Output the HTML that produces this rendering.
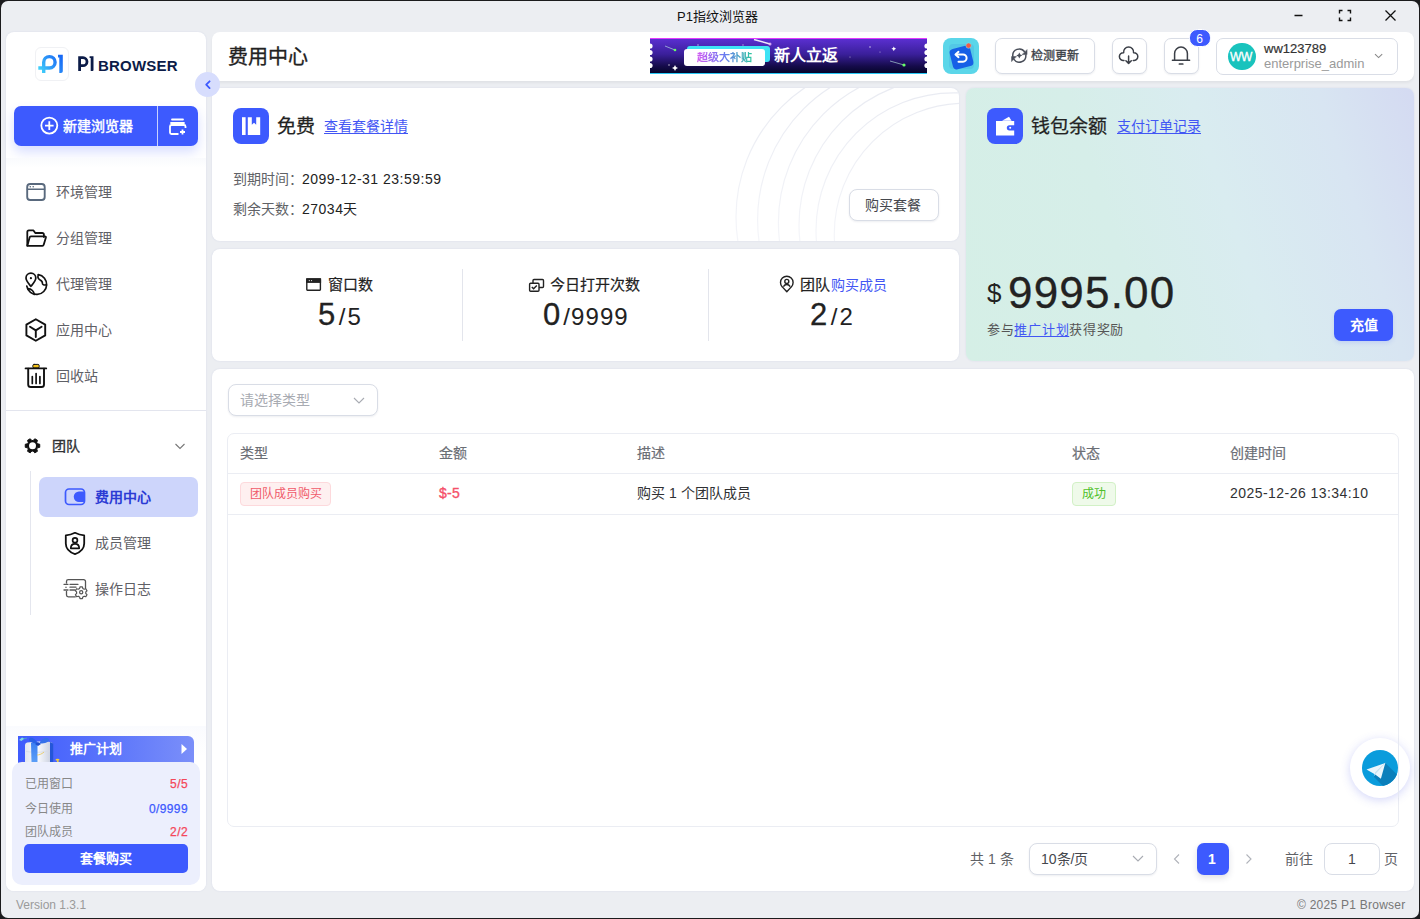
<!DOCTYPE html>
<html lang="zh-CN"><head><meta charset="utf-8">
<style>
*{box-sizing:border-box;margin:0;padding:0}
html,body{width:1420px;height:919px;overflow:hidden;background:#1b1b1d;font-family:"Liberation Sans",sans-serif;}
.abs{position:absolute}
.t{position:absolute;white-space:nowrap;line-height:1}
#win{position:absolute;left:1px;top:1px;width:1418px;height:917px;background:#eceef2;border-radius:7px;overflow:hidden}
#app{position:absolute;left:-1px;top:-1px;width:1420px;height:919px}
.card{position:absolute;background:#fff;border-radius:8px;box-shadow:0 0 2px rgba(70,90,170,.12)}
.mi{position:absolute;font-size:14px;line-height:1;color:#5f6066;white-space:nowrap}
.btn-out{position:absolute;background:#fff;border:1px solid #d9dde6;border-radius:7px;box-shadow:0 1px 2px rgba(30,40,80,.08)}
svg{position:absolute;overflow:visible}
</style></head>
<body>
<div id="win"><div id="app">
  <!-- title bar -->
  <div class="t" style="left:677px;top:10px;font-size:13px;color:#111">P1指纹浏览器</div>
  <svg style="left:1280px;top:0" width="130" height="32" viewBox="0 0 130 32">
    <path d="M14.5 15.5h8" stroke="#111" stroke-width="1.3"/>
    <path d="M59.5 13.5v-3h3M67.5 10.5h3v3M70.5 17.5v3h-3M62.5 20.5h-3v-3" stroke="#111" stroke-width="1.4" fill="none"/>
    <path d="M105.5 10.5l10 10M115.5 10.5l-10 10" stroke="#111" stroke-width="1.3"/>
  </svg>

  <!-- SIDEBAR -->
  <div class="card" style="left:6px;top:32px;width:200px;height:859px"></div>
  <!-- logo -->
  <div class="abs" style="left:35px;top:47px;width:34px;height:34px;border:1px solid #f0f1f4;border-radius:6px;background:#fff"></div>
  <svg style="left:0;top:0" width="1" height="1">
    <defs><linearGradient id="lg1" gradientUnits="userSpaceOnUse" x1="38" y1="73" x2="63" y2="55"><stop offset="0" stop-color="#45e0fb"/><stop offset=".55" stop-color="#2a8df7"/><stop offset="1" stop-color="#1462f5"/></linearGradient></defs>
    <path d="M43.7 73 V62.3 a5.7 5.7 0 1 1 5.7 5.7 H38.3" stroke="url(#lg1)" stroke-width="3.4" fill="none"/>
    <path d="M58 54.8 h4.8 v16.4 a1.8 1.8 0 0 1 -1.8 1.8 h-1.7 V57.6 h-1.3z" fill="url(#lg1)"/>
    <path d="M79.6 71.1 V57.7 h3.4 a4 4 0 0 1 0 8 h-2" stroke="#0c1c48" stroke-width="2.8" fill="none"/>
    <path d="M89.6 56.2 h3.9 v13.8 a1 1 0 0 1 -1 1 h-1.8 V58 h-1.1z" fill="#0c1c48"/>
  </svg>
  <div class="t" style="left:98px;top:57.5px;font-size:15px;font-weight:bold;color:#0c1c48;letter-spacing:0.2px">BROWSER</div>
  <!-- new browser button -->
  <div class="abs" style="left:14px;top:106px;width:184px;height:40px;border-radius:7px;background:#3d5afe;box-shadow:0 6px 12px rgba(61,90,254,.2)"></div>
  <div class="abs" style="left:157px;top:106px;width:1px;height:40px;background:#c9d2ff"></div>
  <div class="abs" style="left:6px;top:158px;width:200px;height:10px;background:linear-gradient(#f9fafd,#fff)"></div>
  <svg style="left:0;top:0" width="1" height="1">
    <circle cx="49.3" cy="125.6" r="8" stroke="#fff" stroke-width="1.8" fill="none"/>
    <path d="M49.3 121.3v8.6M45 125.6h8.6" stroke="#fff" stroke-width="1.8"/>
    <path d="M172 119.5h11M171 123h13" stroke="#fff" stroke-width="1.8" stroke-linecap="round"/>
    <path d="M185.5 128 v-1.5 a1.5 1.5 0 0 0 -1.5 -1.5 h-12.5 a1.5 1.5 0 0 0 -1.5 1.5 v6 a1.5 1.5 0 0 0 1.5 1.5 h7" stroke="#fff" stroke-width="1.8" fill="none"/>
    <path d="M182.5 129.5v5M180 132h5" stroke="#fff" stroke-width="1.8"/>
  </svg>
  <div class="t" style="left:63px;top:119px;font-size:14px;color:#fff;-webkit-text-stroke:.45px #fff">新建浏览器</div>

  <!-- menu -->
  <div class="abs" style="left:39px;top:477px;width:159px;height:40px;border-radius:7px;background:#cdd5fb"></div>
  <svg style="left:0;top:0" width="1" height="1" fill="none" stroke-linecap="round" stroke-linejoin="round">
    <!-- browser -->
    <rect x="27.2" y="184" width="17.5" height="16" rx="3" stroke="#59697d" stroke-width="1.9"/>
    <path d="M27.5 189.3h17" stroke="#59697d" stroke-width="1.6"/>
    <circle cx="30.3" cy="186.8" r=".8" fill="#59697d" stroke="none"/><circle cx="33.2" cy="186.8" r=".8" fill="#59697d" stroke="none"/>
    <!-- folder -->
    <path d="M27.3 245.5 V232 a1.6 1.6 0 0 1 1.6 -1.6 h4.6 l1.8 2.6 h7 a1.6 1.6 0 0 1 1.6 1.6 v2.4" stroke="#111" stroke-width="1.8"/>
    <path d="M27.3 245.8 l2.4 -8.6 a1.2 1.2 0 0 1 1.2 -.9 h14 a1 1 0 0 1 1 1.2 l-2.2 7.3 a1.4 1.4 0 0 1 -1.3 1 z" stroke="#111" stroke-width="1.8"/>
    <!-- globe with pin -->
    <path d="M38.3 274.6 A10 10 0 1 1 26.8 286.2" stroke="#111" stroke-width="1.7"/>
    <path d="M30.9 286.3 c-2.2 -2.6 -4.9 -5.1 -4.9 -8.2 a4.9 4.9 0 0 1 9.8 0 c0 3.1 -2.7 5.6 -4.9 8.2z" stroke="#111" stroke-width="1.7"/>
    <circle cx="30.9" cy="278.2" r="1.1" fill="#111" stroke="none"/>
    <path d="M38.3 274.8 c-.8 2.4 -.2 4.2 1.8 5.2 c1.8 .9 2.4 2.2 2.3 3.3 c-.1 1.3 1.4 2.1 4 1.6" stroke="#111" stroke-width="1.6"/>
    <path d="M27.6 288.6 c1.9 .1 3.6 .7 4.8 1.9 c1.1 1.1 1.6 2.4 2 4" stroke="#111" stroke-width="1.6"/>
    <!-- cube -->
    <path d="M35.8 319.2 l9.4 5.4 v10.8 l-9.4 5.4 l-9.4 -5.4 v-10.8 z" stroke="#111" stroke-width="1.9"/>
    <path d="M30 326.8 l5.8 3.6 l5.8 -3.6 M35.8 330.4 v6.6" stroke="#111" stroke-width="1.9"/>
    <!-- trash -->
    <rect x="32.8" y="364.4" width="6.4" height="3.6" rx="1.3" fill="#f3c21b" stroke="#111" stroke-width="1"/>
    <path d="M25.6 368.4 h20.6" stroke="#111" stroke-width="1.9"/>
    <path d="M28.2 368.8 v15.6 a2.6 2.6 0 0 0 2.6 2.6 h10.6 a2.6 2.6 0 0 0 2.6 -2.6 v-15.6" stroke="#111" stroke-width="1.9"/>
    <path d="M32.3 376.5v7M36.1 373.5v10M39.9 376.5v7" stroke="#111" stroke-width="1.7"/>
    <!-- gear -->
    <path d="M37.38 443.73 L39.74 444.26 L39.74 447.34 L37.38 447.87 L36.73 448.99 L37.45 451.30 L34.79 452.84 L33.15 451.06 L31.85 451.06 L30.21 452.84 L27.55 451.30 L28.27 448.99 L27.62 447.87 L25.26 447.34 L25.26 444.26 L27.62 443.73 L28.27 442.61 L27.55 440.30 L30.21 438.76 L31.85 440.54 L33.15 440.54 L34.79 438.76 L37.45 440.30 L36.73 442.61 Z" fill="#111" stroke="#111" stroke-width="1" stroke-linejoin="round"/><circle cx="32.5" cy="445.8" r="3.5" fill="#fff" stroke="none"/>
    <!-- active wallet icon -->
    <rect x="65.5" y="489" width="19" height="15.5" rx="3.5" stroke="#3d5afe" stroke-width="1.7"/>
    <path d="M85 491.5 h-6 a4.2 4.2 0 0 0 0 10.5 h6 z" fill="#3d5afe" stroke="none"/>
    <!-- shield -->
    <path d="M75 532.8 c3 1.6 6 2.4 9.2 2.6 v8.2 c0 5 -4 8.8 -9.2 10.6 c-5.2 -1.8 -9.2 -5.6 -9.2 -10.6 v-8.2 c3.2 -.2 6.2 -1 9.2 -2.6z" stroke="#111" stroke-width="1.8"/>
    <circle cx="75" cy="540.3" r="2.4" stroke="#111" stroke-width="1.7"/>
    <path d="M70.8 548.3 c0 -3 1.8 -4.5 4.2 -4.5 s4.2 1.5 4.2 4.5 z" stroke="#111" stroke-width="1.7"/>
    <!-- log -->
    <path d="M66.5 583 v-1.5 a1.8 1.8 0 0 1 1.8 -1.8 h15.4 a1.8 1.8 0 0 1 1.8 1.8 v7" stroke="#555" stroke-width="1.3"/>
    <path d="M66.5 591.5 v3.5 a1.8 1.8 0 0 0 1.8 1.8 h7" stroke="#555" stroke-width="1.3"/>
    <path d="M64 584.3h4M70 584.3h8M64 590h4M70 590h5M70 587.2h6M66 587.2v.2" stroke="#555" stroke-width="1.3"/>
    <g transform="translate(81.2 592.2)">
      <path d="M-1.2 -5.4 h2.4 l.4 1.6 l1.4 .8 l1.6 -.5 l1.2 2.1 l-1.2 1.1 v1.6 l1.2 1.1 l-1.2 2.1 l-1.6 -.5 l-1.4 .8 l-.4 1.6 h-2.4 l-.4 -1.6 l-1.4 -.8 l-1.6 .5 l-1.2 -2.1 l1.2 -1.1 v-1.6 l-1.2 -1.1 l1.2 -2.1 l1.6 .5 l1.4 -.8 z" stroke="#555" stroke-width="1.2" fill="#fff"/>
      <circle r="1.6" stroke="#555" stroke-width="1.2"/>
    </g>
  </svg>
  <div class="mi" style="left:56px;top:185px">环境管理</div>
  <div class="mi" style="left:56px;top:231px">分组管理</div>
  <div class="mi" style="left:56px;top:277px">代理管理</div>
  <div class="mi" style="left:56px;top:323px">应用中心</div>
  <div class="mi" style="left:56px;top:369px">回收站</div>
  <div class="abs" style="left:6px;top:410px;width:200px;height:1px;background:#e3e5ee"></div>
  <div class="mi" style="left:52px;top:439px;color:#303133;-webkit-text-stroke:.35px #303133">团队</div>
  <svg style="left:0;top:0" width="1" height="1"><path d="M175.5 444l4.5 4.5 4.5-4.5" stroke="#777" stroke-width="1.1" fill="none"/></svg>
  <div class="abs" style="left:30px;top:471px;width:1px;height:144px;background:#e4e6ee"></div>
    <div class="mi" style="left:95px;top:490px;color:#2b3bd4;font-weight:bold">费用中心</div>
  <div class="mi" style="left:95px;top:536px">成员管理</div>
  <div class="mi" style="left:95px;top:582px">操作日志</div>

  <!-- promo -->
  <div class="abs" style="left:6px;top:726px;width:200px;height:165px;border-radius:0 0 8px 8px;background:linear-gradient(#fafbfe,#fff 30px)"></div>
  <div class="abs" style="left:18px;top:736px;width:176px;height:30px;border-radius:0 6px 0 0;background:linear-gradient(90deg,#3f5cfd 0%,#5a74fb 50%,#7b8ff9 100%);overflow:hidden">
    <svg style="left:0;top:0" width="50" height="30">
      <defs><linearGradient id="gb" x1="0" y1="0" x2="1" y2="0"><stop offset="0" stop-color="#e2e6ef"/><stop offset=".45" stop-color="#fafbff"/><stop offset="1" stop-color="#c3cadb"/></linearGradient>
      <linearGradient id="rb" x1="0" y1="0" x2="0" y2="1"><stop offset="0" stop-color="#3c7ff2"/><stop offset="1" stop-color="#5b9ef7"/></linearGradient></defs>
      <path d="M1 4 l3 -2.5 l2.5 1 l-3 2.5z" fill="#7fd8e0"/><path d="M5 3 l4 -1" stroke="#4ab0c0" stroke-width=".8"/>
      <path d="M7 9 q0 -2 2 -2.6 l16 -1.2 q9 0 10 2.5 v18.3 h-28z" fill="url(#gb)"/>
      <path d="M8 15.5 q12 2 27 -1" stroke="#d5dae6" stroke-width=".8" fill="none"/>
      <path d="M13 7 l6.5 -.5 v19.5 h-6z" fill="url(#rb)"/>
      <path d="M32 6 l3.2 1.5 v18.5 h-3.2z" fill="#2456d8"/>
      <path d="M20 7.5 c-3 -6 -9 -7.5 -9 -4 c0 2.5 4 4 9 4z" fill="#2a62e6"/>
      <path d="M21 7.5 c3 -6 10 -7 10 -3.5 c0 2.5 -5 3.8 -10 3.5z" fill="#3570ea"/>
      <path d="M17 8 l3 -2 l3 2 l-3 2z" fill="#1f4fd0"/>
      <path d="M19 19 c2 0 5 -1 7 -3" stroke="#e8c552" stroke-width=".8" fill="none"/>
      <ellipse cx="39.5" cy="23.8" rx="2" ry="1" fill="#f5cf3a"/><rect x="39" y="24.5" width="1.6" height="3" fill="#f5cf3a"/>
      <circle cx="4.5" cy="27.5" r="1.8" fill="#ef6a45"/><circle cx="36" cy="27.5" r="1.3" fill="#ef6a45"/>
    </svg>
  </div>
  <div class="t" style="left:70px;top:742px;font-size:13px;font-weight:bold;color:#fff">推广计划</div>
  <svg style="left:0;top:0" width="1" height="1"><path d="M181.5 744v10l5.5 -5z" fill="#fff"/></svg>
  <div class="abs" style="left:12px;top:762px;width:188px;height:123px;border-radius:10px;background:#eceffd"></div>
  <div class="t" style="left:25px;top:778px;font-size:12px;color:#888">已用窗口</div>
  <div class="t" style="left:25px;top:803px;font-size:12px;color:#888">今日使用</div>
  <div class="t" style="left:25px;top:826px;font-size:12px;color:#888">团队成员</div>
  <div class="t" style="right:1232px;top:778px;font-size:12px;color:#f4475a;letter-spacing:.4px;-webkit-text-stroke:.25px #f4475a">5/5</div>
  <div class="t" style="right:1232px;top:803px;font-size:12px;color:#3d5afe;letter-spacing:.4px;-webkit-text-stroke:.25px #3d5afe">0/9999</div>
  <div class="t" style="right:1232px;top:826px;font-size:12px;color:#f4475a;letter-spacing:.4px;-webkit-text-stroke:.25px #f4475a">2/2</div>
  <div class="abs" style="left:24px;top:844px;width:164px;height:29px;border-radius:5px;background:#3d5afe"></div>
  <div class="t" style="left:80px;top:852px;font-size:13px;color:#fff;font-weight:bold">套餐购买</div>

  <!-- HEADER -->
  <div class="card" style="left:212px;top:32px;width:1202px;height:49px;box-shadow:0 2px 3px rgba(0,0,0,.05)"></div>
  <div class="t" style="left:228px;top:47px;font-size:20px;color:#222;-webkit-text-stroke:.3px #222">费用中心</div>
  <!-- banner -->
  <div class="abs" style="left:650px;top:38px;width:277px;height:36px;overflow:hidden;background:linear-gradient(180deg,#5a2fd0 0%,#3a1f9a 45%,#150b4a 80%,#05052a 100%);border-top:1.5px solid #e23cff;border-bottom:1.5px solid #29c8f5">
    <svg style="left:0;top:0" width="277" height="36">
      <circle cx="0" cy="7" r="2.6" fill="#fff"/><circle cx="0" cy="13.5" r="2.6" fill="#fff"/><circle cx="0" cy="20" r="2.6" fill="#fff"/><circle cx="0" cy="26.5" r="2.6" fill="#fff"/>
      <circle cx="277" cy="7" r="2.6" fill="#fff"/><circle cx="277" cy="13.5" r="2.6" fill="#fff"/><circle cx="277" cy="20" r="2.6" fill="#fff"/><circle cx="277" cy="26.5" r="2.6" fill="#fff"/>
      <path d="M15 7 l10 4" stroke="#cfe" stroke-width=".8" opacity=".7"/><circle cx="25" cy="11" r="1.3" fill="#6f6"/>
      <path d="M104 0.5 l16 4.5" stroke="#fff" stroke-width="1.5" opacity=".9"/><circle cx="120" cy="5" r="1.5" fill="#f0c0ff" opacity=".8"/>
      <path d="M240 22 l14 4" stroke="#cfe" stroke-width=".8" opacity=".7"/><circle cx="254" cy="26" r="1.6" fill="#6f6"/>
      <path d="M24 28 l1 -2 l1 2 l2 1 l-2 1 l-1 2 l-1 -2 l-2 -1z" fill="#fff"/>
      <circle cx="19" cy="26" r=".8" fill="#fff" opacity=".7"/><circle cx="48" cy="6" r=".8" fill="#fff" opacity=".6"/><circle cx="93" cy="6" r=".7" fill="#fff" opacity=".6"/>
      <circle cx="220" cy="8" r=".8" fill="#fff" opacity=".7"/><circle cx="200" cy="18" r=".6" fill="#fff" opacity=".6"/><circle cx="230" cy="13" r=".6" fill="#fff" opacity=".6"/>
      <path d="M243 9 l.8 -1.6 l.8 1.6 l1.6 .8 l-1.6 .8 l-.8 1.6 l-.8 -1.6 l-1.6 -.8z" fill="#fff"/>
    </svg>
    <div class="abs" style="left:37px;top:7px;width:83px;height:16px;border-radius:3px;background:#3ee3f5"></div>
    <div class="abs" style="left:34px;top:10px;width:81px;height:17px;border-radius:3px;background:#fff"></div>
    <div class="t" style="left:47px;top:13px;font-size:11px;font-weight:bold;background:linear-gradient(90deg,#d35cf3,#6b7cf0 50%,#2ec6a0);-webkit-background-clip:text;color:transparent">超级大补贴</div>
    <div class="t" style="left:124px;top:9px;font-size:16px;font-weight:bold;color:#fff">新人立返</div>
  </div>
  <!-- app icon -->
  <div class="abs" style="left:943px;top:38px;width:36px;height:36px;border-radius:8px;background:#5bd6e9;overflow:hidden">
    <div class="abs" style="left:6px;top:6px;width:25px;height:25px;border-radius:4px;background:#53c8e6"></div>
    <div class="abs" style="left:8px;top:9px;width:21px;height:21px;border-radius:4px;background:#165fe6;transform:rotate(-14deg)"></div>
    <svg style="left:0;top:0" width="36" height="36"><path d="M13.5 16.5 h6.5 a3.6 3.6 0 0 1 0 7.2 h-4.5" stroke="#fff" stroke-width="2" fill="none" stroke-linecap="round"/><path d="M15.5 13.8 l-3 2.7 l3 2.7" stroke="#fff" stroke-width="2" fill="none" stroke-linecap="round" stroke-linejoin="round"/><circle cx="25.6" cy="7.6" r="2.7" fill="#f25c4a" stroke="#7fe0ee" stroke-width=".6"/></svg>
  </div>
  <!-- check update -->
  <div class="btn-out" style="left:995px;top:38px;width:100px;height:36px"></div>
  <svg style="left:0;top:0" width="1" height="1" fill="none" stroke="#4a4f5a" stroke-width="1.5" stroke-linecap="round">
    <path d="M1012.8 56.2 A6.5 6.5 0 0 1 1024.6 51.8 M1025.8 55 A6.5 6.5 0 0 1 1014 59.4"/>
    <path d="M1027 50 v4.6 h-4.6z M1011.6 61.2 v-4.6 h4.6z" fill="#4a4f5a" stroke-width=".6" stroke-linejoin="round"/>
    <path d="M1019.3 52.6 l1 2 l2 1 l-2 1 l-1 2 l-1 -2 l-2 -1 l2 -1z" fill="#4a4f5a" stroke="none"/>
  </svg>
  <div class="t" style="left:1031px;top:50px;font-size:12px;color:#3b3f47;-webkit-text-stroke:.3px #3b3f47">检测更新</div>
  <!-- cloud -->
  <div class="btn-out" style="left:1112px;top:38px;width:35px;height:36px"></div>
  <svg style="left:0;top:0" width="1" height="1" fill="none" stroke="#3b3f47" stroke-width="1.6" stroke-linecap="round" stroke-linejoin="round">
    <path d="M1123.98 60.44 A3.9 3.9 0 1 1 1123.65 52.72 A5 5 0 1 1 1133.55 52.72 A3.9 3.9 0 1 1 1133.22 60.44" stroke-width="1.5"/>
    <path d="M1128.6 56 v7.4 M1125.9 60.7 l2.7 2.7 l2.7 -2.7" stroke-width="1.5"/>
  </svg>
  <!-- bell -->
  <div class="btn-out" style="left:1164px;top:38px;width:35px;height:36px"></div>
  <svg style="left:0;top:0" width="1" height="1" fill="none" stroke="#3b3f47" stroke-width="1.6" stroke-linecap="round" stroke-linejoin="round">
    <path d="M1174.6 60 v-6.5 a6.4 6.4 0 0 1 12.8 0 v6.5 M1172.4 60.3 h17.2" stroke-width="1.5"/>
    <path d="M1179.4 64 h3.4" stroke-width="1.7"/>
  </svg>
  <div class="abs" style="left:1190px;top:29.7px;width:19.5px;height:16.3px;border-radius:8.2px;background:#3d5afe;border:1px solid #fff;box-sizing:content-box;margin:-1px 0 0 -1px"></div>
  <div class="t" style="left:1196.3px;top:32.5px;font-size:12px;color:#fff">6</div>
  <!-- user -->
  <div class="btn-out" style="left:1216px;top:38px;width:182px;height:37px;box-shadow:none"></div>
  <div class="abs" style="left:1228px;top:42.5px;width:27.5px;height:27.5px;border-radius:50%;background:#19c3bd"></div>
  <div class="t" style="left:1230px;top:51px;font-size:12px;color:#fff;letter-spacing:-.3px;-webkit-text-stroke:.3px #fff">WW</div>
  <div class="t" style="left:1264px;top:42px;font-size:13px;color:#333;-webkit-text-stroke:.2px #333">ww123789</div>
  <div class="t" style="left:1264px;top:57px;font-size:13px;color:#9a9a9a">enterprise_admin</div>
  <svg style="left:0;top:0" width="1" height="1"><path d="M1375 54.2 l3.6 3.4 l3.6 -3.4" stroke="#888" stroke-width="1.1" fill="none"/></svg>

  <!-- FREE CARD -->
  <div class="card" style="left:212px;top:88px;width:747px;height:153px;overflow:hidden">
    <svg style="left:0;top:0" width="746" height="153" fill="none" stroke="url(#arcg)" stroke-width="1.2"><defs><linearGradient id="arcg" gradientUnits="userSpaceOnUse" x1="0" y1="0" x2="0" y2="153"><stop offset="0" stop-color="#e9ebf2"/><stop offset="1" stop-color="#f4f5f9"/></linearGradient></defs>
      <circle cx="753" cy="146" r="130.7"/>
      <circle cx="741.5" cy="142.3" r="137.5"/>
      <circle cx="734" cy="137" r="147"/>
      <circle cx="719.8" cy="134.6" r="153.4"/>
      <circle cx="702.6" cy="131.9" r="157"/>
      <circle cx="679.8" cy="129" r="155.8"/>
    </svg>
  </div>
  <div class="abs" style="left:233px;top:108px;width:36px;height:36px;border-radius:8px;background:#3d5afe"></div>
  <svg style="left:0;top:0" width="1" height="1"><rect x="242" y="117.2" width="3.6" height="17.8" fill="#fff"/><path d="M247.8 117.2 h4 v7.5 l2.2 -2 l2.2 2 v-7.5 h4 v17.8 h-12.4z" fill="#fff"/></svg>
  <div class="t" style="left:277px;top:117px;font-size:19px;color:#222;-webkit-text-stroke:.25px #222">免费</div>
  <div class="t" style="left:324px;top:119px;font-size:14px;color:#4256f4;text-decoration:underline;text-underline-offset:2px">查看套餐详情</div>
  <div class="t" style="left:233px;top:172px;font-size:14px;color:#606266">到期时间：</div>
  <div class="t" style="left:302px;top:172px;font-size:14px;color:#222;letter-spacing:.5px">2099-12-31 23:59:59</div>
  <div class="t" style="left:233px;top:202px;font-size:14px;color:#606266">剩余天数：</div>
  <div class="t" style="left:302px;top:202px;font-size:14px;color:#222;letter-spacing:.5px">27034天</div>
  <div class="btn-out" style="left:849px;top:189px;width:90px;height:32px;border-radius:8px"></div>
  <div class="t" style="left:865px;top:198px;font-size:14px;color:#45474d">购买套餐</div>

  <!-- STATS -->
  <div class="card" style="left:212px;top:249px;width:747px;height:112px"></div>
  <div class="abs" style="left:462px;top:269px;width:1px;height:72px;background:#e3e5ec"></div>
  <div class="abs" style="left:708px;top:269px;width:1px;height:72px;background:#e3e5ec"></div>
  <svg style="left:0;top:0" width="1" height="1" fill="none" stroke="#222" stroke-width="1.4">
    <rect x="306.8" y="279" width="13.6" height="11.2" rx=".6"/><rect x="306.8" y="279" width="13.6" height="3.2" fill="#222"/><circle cx="309.3" cy="280.6" r=".55" fill="#fff" stroke="none"/><circle cx="311.6" cy="280.6" r=".55" fill="#fff" stroke="none"/>
    <rect x="533" y="279.5" width="10.5" height="8" rx="1"/><rect x="529.6" y="283.2" width="9.4" height="8" rx="1" fill="#fff"/><path d="M531.8 287 l1.8 1.8 l3.2 -3.4"/>
    <path d="M786.8 291.8 L782.3 286.9 A6.3 6.3 0 1 1 791.3 286.9 Z" stroke-linejoin="round"/><circle cx="786.8" cy="281.4" r="2"/><path d="M783.4 286.6 c.9 -1.5 2 -2.1 3.4 -2.1 s2.5 .6 3.4 2.1"/>
  </svg>
  <div class="t" style="left:328px;top:277px;font-size:15px;color:#222;-webkit-text-stroke:.2px #222">窗口数</div>
  <div class="t" style="left:550px;top:277px;font-size:15px;color:#222;-webkit-text-stroke:.2px #222">今日打开次数</div>
  <div class="t" style="left:800px;top:277px;font-size:15px;color:#222;-webkit-text-stroke:.2px #222">团队</div>
  <div class="t" style="left:831px;top:278px;font-size:14px;color:#4256f4">购买成员</div>
  <div class="t" style="left:318px;top:299px;font-size:31px;color:#222;-webkit-text-stroke:.3px #222">5<span style="font-size:24px;-webkit-text-stroke:0;letter-spacing:2px;margin-left:3.5px">/5</span></div>
  <div class="t" style="left:543px;top:299px;font-size:31px;color:#222;-webkit-text-stroke:.3px #222">0<span style="font-size:24px;-webkit-text-stroke:0;letter-spacing:1.1px;margin-left:3px">/9999</span></div>
  <div class="t" style="left:810px;top:299px;font-size:31px;color:#222;-webkit-text-stroke:.3px #222">2<span style="font-size:24px;-webkit-text-stroke:0;letter-spacing:2px;margin-left:3.5px">/2</span></div>

  <!-- WALLET -->
  <div class="card" style="left:966px;top:88px;width:448px;height:273px;background:linear-gradient(72deg,#d5efe6 0%,#d6eee9 35%,#d9ecf0 58%,#d8e5f2 82%,#d4daf2 100%)"></div>
  <div class="abs" style="left:987px;top:108px;width:36px;height:36px;border-radius:8px;background:#3d5afe"></div>
  <svg style="left:0;top:0" width="1" height="1"><path d="M1002 120.8 l7 -4 l2.6 4z" fill="#fff"/><path d="M996 121 h18.2 v4.2 h-4.8 a2.6 2.6 0 0 0 0 5.2 h4.8 v5 h-18.2z" fill="#fff"/><circle cx="1010.2" cy="127.8" r="1" fill="#fff"/></svg>
  <div class="t" style="left:1031px;top:117px;font-size:19px;color:#222;-webkit-text-stroke:.25px #222">钱包余额</div>
  <div class="t" style="left:1117px;top:119px;font-size:14px;color:#4256f4;text-decoration:underline;text-underline-offset:2px">支付订单记录</div>
  <div class="t" style="left:987px;top:280px;font-size:26px;color:#222">$</div>
  <div class="t" style="left:1008px;top:271px;font-size:44px;color:#222;letter-spacing:1.2px;-webkit-text-stroke:.3px #222">9995.00</div>
  <div class="t" style="left:987px;top:323px;font-size:13px;color:#555;letter-spacing:.7px">参与<span style="color:#4256f4;text-decoration:underline;text-underline-offset:2px">推广计划</span>获得奖励</div>
  <div class="abs" style="left:1334px;top:309px;width:59px;height:32px;border-radius:7px;background:#3d5afe;box-shadow:0 2px 4px rgba(61,90,254,.15)"></div>
  <div class="t" style="left:1350px;top:318px;font-size:14px;color:#fff;font-weight:bold">充值</div>

  <!-- collapse button -->
  <div class="abs" style="left:195px;top:72px;width:25px;height:25px;border-radius:50%;background:#d7ddfd"></div>
  <svg style="left:0;top:0" width="1" height="1"><path d="M209.6 81.3l-3.4 3.4 3.4 3.4" stroke="#3d5afe" stroke-width="1.8" fill="none" stroke-linecap="round" stroke-linejoin="round"/></svg>

  <!-- TABLE CARD -->
  <div class="card" style="left:212px;top:369px;width:1202px;height:522px"></div>
  <div class="btn-out" style="left:228px;top:384px;width:150px;height:32px;border-radius:8px"></div>
  <div class="t" style="left:240px;top:393px;font-size:14px;color:#a8abb2">请选择类型</div>
  <svg style="left:0;top:0" width="1" height="1"><path d="M354 398 l5 5 l5 -5" stroke="#a8abb2" stroke-width="1.1" fill="none"/></svg>
  <div class="abs" style="left:227px;top:433px;width:1172px;height:394px;border:1px solid #ebedf3;border-radius:7px"></div>
  <div class="abs" style="left:228px;top:473px;width:1170px;height:1px;background:#ebedf3"></div>
  <div class="abs" style="left:228px;top:514px;width:1170px;height:1px;background:#ebedf3"></div>
  <div class="t" style="left:240px;top:446px;font-size:14px;color:#6b6e75;-webkit-text-stroke:.2px #6b6e75">类型</div>
  <div class="t" style="left:439px;top:446px;font-size:14px;color:#6b6e75;-webkit-text-stroke:.2px #6b6e75">金额</div>
  <div class="t" style="left:637px;top:446px;font-size:14px;color:#6b6e75;-webkit-text-stroke:.2px #6b6e75">描述</div>
  <div class="t" style="left:1072px;top:446px;font-size:14px;color:#6b6e75;-webkit-text-stroke:.2px #6b6e75">状态</div>
  <div class="t" style="left:1230px;top:446px;font-size:14px;color:#6b6e75;-webkit-text-stroke:.2px #6b6e75">创建时间</div>
  <div class="abs" style="left:240px;top:482px;width:91px;height:24px;border-radius:4px;background:#fef0f0;border:1px solid #fdd9dc"></div>
  <div class="t" style="left:250px;top:488px;font-size:12px;color:#f05b6a">团队成员购买</div>
  <div class="t" style="left:439px;top:486px;font-size:14px;color:#f5506a;-webkit-text-stroke:.35px #f5506a;letter-spacing:.3px">$-5</div>
  <div class="t" style="left:637px;top:486px;font-size:14px;color:#303133">购买 1 个团队成员</div>
  <div class="abs" style="left:1072px;top:482px;width:44px;height:24px;border-radius:4px;background:#effaea;border:1px solid #d2f1c6"></div>
  <div class="t" style="left:1082px;top:488px;font-size:12px;color:#4fc02a">成功</div>
  <div class="t" style="left:1230px;top:486px;font-size:14px;color:#303133;letter-spacing:.45px">2025-12-26 13:34:10</div>
  <!-- pagination -->
  <div class="t" style="left:970px;top:852px;font-size:14px;color:#606266">共 1 条</div>
  <div class="btn-out" style="left:1029px;top:843px;width:128px;height:32px;border-radius:8px"></div>
  <div class="t" style="left:1041px;top:852px;font-size:14px;color:#45474d">10条/页</div>
  <svg style="left:0;top:0" width="1" height="1"><path d="M1133 856 l5 5 l5 -5" stroke="#a8abb2" stroke-width="1.1" fill="none"/>
    <path d="M1179 854.5 l-4.5 4.5 l4.5 4.5" stroke="#b0b3ba" stroke-width="1.1" fill="none"/>
    <path d="M1246.5 854.5 l4.5 4.5 l-4.5 4.5" stroke="#b0b3ba" stroke-width="1.1" fill="none"/></svg>
  <div class="abs" style="left:1197px;top:843px;width:32px;height:32px;border-radius:7px;background:#3d5afe;box-shadow:0 3px 6px rgba(40,50,90,.15)"></div>
  <div class="t" style="left:1208px;top:852px;font-size:14px;color:#fff;font-weight:bold">1</div>
  <div class="t" style="left:1285px;top:852px;font-size:14px;color:#606266">前往</div>
  <div class="btn-out" style="left:1324px;top:843px;width:56px;height:32px;border-radius:8px;box-shadow:none"></div>
  <div class="t" style="left:1348px;top:852px;font-size:14px;color:#45474d">1</div>
  <div class="t" style="left:1384px;top:852px;font-size:14px;color:#606266">页</div>
  <!-- telegram -->
  <div class="abs" style="left:1350px;top:738px;width:60px;height:60px;border-radius:50%;background:#fff;box-shadow:0 2px 10px rgba(80,90,230,.25)"></div>
  <div class="abs" style="left:1398px;top:738px;width:1px;height:60px;background:#e6e9f2"></div>
  <div class="abs" style="left:1362px;top:750px;width:36px;height:36px;border-radius:50%;background:#0a9cdc;overflow:hidden">
    <svg style="left:0;top:0" width="36" height="36"><path d="M23.3 12.9 L53.3 42.9 L41.5 56.6 L11.5 26.6z" fill="#0a7fbb"/><path d="M4.5 19.6 L23.3 12.9 L18.9 28.7 L13.2 24.6z" fill="#eaf6fc"/><path d="M13.2 24.6 L11.6 26.8 L13.2 22.5 L23.3 12.9z" fill="#c9e4f2"/><path d="M13.2 22.6 l10 -9.6" stroke="#bfdcec" stroke-width=".6"/></svg>
  </div>

  <div class="t" style="left:16px;top:899px;font-size:12px;color:#9a9a9a">Version 1.3.1</div>
  <div class="t" style="left:1297px;top:899px;font-size:12px;color:#777;letter-spacing:.25px">© 2025 P1 Browser</div>
</div></div>
</body></html>
